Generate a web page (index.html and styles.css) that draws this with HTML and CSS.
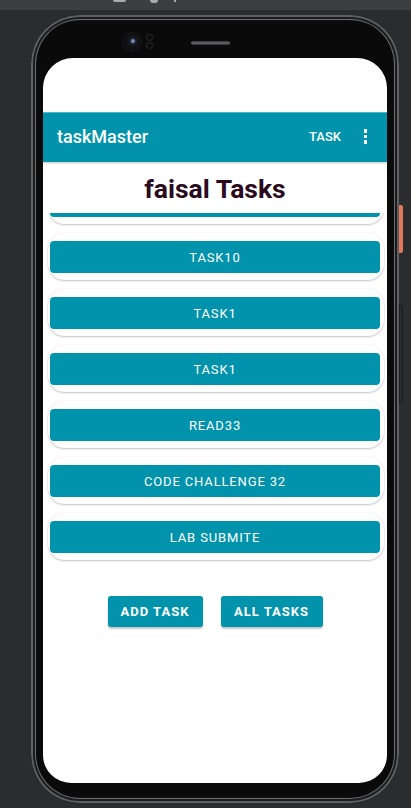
FILE: index.html
```html
<!DOCTYPE html>
<html>
<head>
<meta charset="utf-8">
<link rel="stylesheet" href="styles.css">
</head>
<body>
<div class="ide-strip">
  <span class="strip-icon bar"></span>
  <span class="strip-icon dot"></span>
  <span class="strip-icon tick"></span>
</div>
<div class="phone">
  <div class="bezel-top">
    <span class="camera"></span>
    <span class="sensor"><i></i><i></i></span>
    <span class="speaker"></span>
  </div>
  <div class="screen">
    <div class="status"></div>
    <header class="appbar">
      <span class="app-title">taskMaster</span>
      <span class="action">TASK</span>
      <span class="kebab"><i></i><i></i><i></i></span>
    </header>
    <h1 class="page-title">faisal Tasks</h1>
    <div class="list">
      <div class="list-inner">
        <div class="card"><div class="task-btn"></div></div>
        <div class="card"><div class="task-btn">TASK10</div></div>
        <div class="card"><div class="task-btn">TASK1</div></div>
        <div class="card"><div class="task-btn">TASK1</div></div>
        <div class="card"><div class="task-btn">READ33</div></div>
        <div class="card"><div class="task-btn">CODE CHALLENGE 32</div></div>
        <div class="card"><div class="task-btn">LAB SUBMITE</div></div>
      </div>
    </div>
    <div class="actions">
      <button class="main-btn add">ADD TASK</button>
      <button class="main-btn all">ALL TASKS</button>
    </div>
  </div>
  <span class="side-btn power"></span>
  <span class="side-btn volume"></span>
</div>
</body>
</html>
```
FILE: styles.css
```css
* { box-sizing: border-box; }
html, body { margin: 0; padding: 0; }
body {
  width: 411px;
  height: 808px;
  overflow: hidden;
  background: #2b2c2e;
  font-family: Roboto, "Noto Sans", sans-serif;
}
.ide-strip {
  height: 10px;
  background: #3c3f41;
  position: relative;
  display: flex;
  align-items: flex-start;
  padding-left: 113px;
  gap: 22px;
}
.strip-icon { display: block; background: #a9abad; }
.strip-icon.bar { width: 13px; height: 2px; border-radius: 0 0 2px 2px; }
.strip-icon.dot { width: 8px; height: 3px; border-radius: 0 0 4px 4px; margin-left: 2px; }
.strip-icon.tick { width: 2px; height: 2px; margin-left: -6px; }

.phone {
  position: relative;
  margin: 4px 0 0 30px;
  width: 370px;
  height: 790px;
  border-radius: 50px;
  background: #0a0a0b;
  border: 1px solid #2e2e30;
  box-shadow: inset 0 0 0 2px #5e5f61, inset 0 0 0 4px #1c1c1e, inset 0 0 0 5px #6a6b6d, inset 0 0 0 7px #0c0c0d;
  padding: 0 13px 0 12px;
}
.bezel-top {
  height: 43px;
  display: flex;
  align-items: flex-start;
}
.camera {
  margin: 18px 0 0 80px;
  width: 18px;
  height: 18px;
  border-radius: 50%;
  background: radial-gradient(circle at 55% 45%, #6f86b0 0 1.5px, #1b2331 2.5px, #121316 5px, #0f0f11 9px);
  box-shadow: 0 0 0 1px #161719;
}
.sensor {
  margin: 19px 0 0 5px;
  width: 8px;
  height: 17px;
  display: flex;
  flex-direction: column;
  gap: 1px;
}
.sensor i {
  display: block;
  width: 7px;
  height: 7px;
  border-radius: 50%;
  border: 1px solid #2a2a2c;
}
.speaker {
  margin: 26px 0 0 37px;
  width: 39px;
  height: 4px;
  border-radius: 2px;
  background: linear-gradient(180deg, #2c2c2e, #6c6c6e 50%, #2c2c2e);
}
.screen {
  width: 344px;
  height: 725px;
  background: #ffffff;
  border-radius: 30px 30px 28px 28px;
  overflow: hidden;
  display: flex;
  flex-direction: column;
}
.status { height: 54px; flex: none; }
.appbar {
  flex: none;
  height: 50px;
  background: #0193ab;
  border-top: 1px solid #4fb4c6;
  box-shadow: 0 1px 2px rgba(0,0,0,0.25);
  display: flex;
  align-items: center;
  padding: 0 0 0 14px;
  color: #ffffff;
  position: relative;
  z-index: 1;
}
.app-title {
  font-size: 18px;
  font-weight: 500;
  flex: 1;
  margin-top: -2px;
}
.action {
  font-size: 13px;
  font-weight: 500;
  margin-top: -2px;
}
.kebab {
  width: 46px;
  display: flex;
  flex-direction: column;
  align-items: center;
  gap: 2px;
  margin-top: -2px;
  padding-left: 3px;
}
.kebab i {
  display: block;
  width: 3.5px;
  height: 3.5px;
  background: #ffffff;
  border-radius: 0.5px;
}
.page-title {
  flex: none;
  margin: 0;
  padding-top: 3px;
  height: 51px;
  line-height: 47px;
  text-align: center;
  font-size: 26.5px;
  font-weight: 700;
  color: #2b0a20;
}
.list {
  flex: none;
  height: 350px;
  overflow: hidden;
}
.list-inner {
  margin-top: -36px;
  display: flex;
  flex-direction: column;
  gap: 9px;
}
.card {
  margin: 0 3px 0 5px;
  height: 47px;
  background: #ffffff;
  border-radius: 16px;
  box-shadow: 0 1px 2px rgba(0,0,0,0.22), 0 0 1px rgba(0,0,0,0.12);
  padding: 8px 4px 7px 2px;
}
.task-btn {
  height: 32px;
  background: #0193ab;
  border-radius: 4px;
  color: #ffffff;
  font-size: 13px;
  font-weight: 400;
  letter-spacing: 0.85px;
  display: flex;
  align-items: center;
  justify-content: center;
}
.actions {
  flex: none;
  padding-top: 33px;
  display: flex;
  justify-content: center;
  gap: 18px;
}
.main-btn {
  height: 31px;
  border: none;
  border-radius: 3px;
  background: #0193ab;
  color: #ffffff;
  font-family: Roboto, sans-serif;
  font-size: 13px;
  font-weight: 700;
  letter-spacing: 1px;
  box-shadow: 0 2px 2px rgba(0,0,0,0.22), 0 0 1px rgba(0,0,0,0.15);
  padding: 0;
}
.main-btn.add { width: 95px; }
.main-btn.all { width: 102px; }

.side-btn {
  position: absolute;
  right: -4px;
  width: 4px;
  border-radius: 0 2px 2px 0;
}
.side-btn.power {
  top: 190px;
  height: 48px;
  background: #e07a5a;
}
.side-btn.volume {
  top: 290px;
  height: 98px;
  border: 1px solid #1a1a1b;
  background: #2a2a2c;
}
```
